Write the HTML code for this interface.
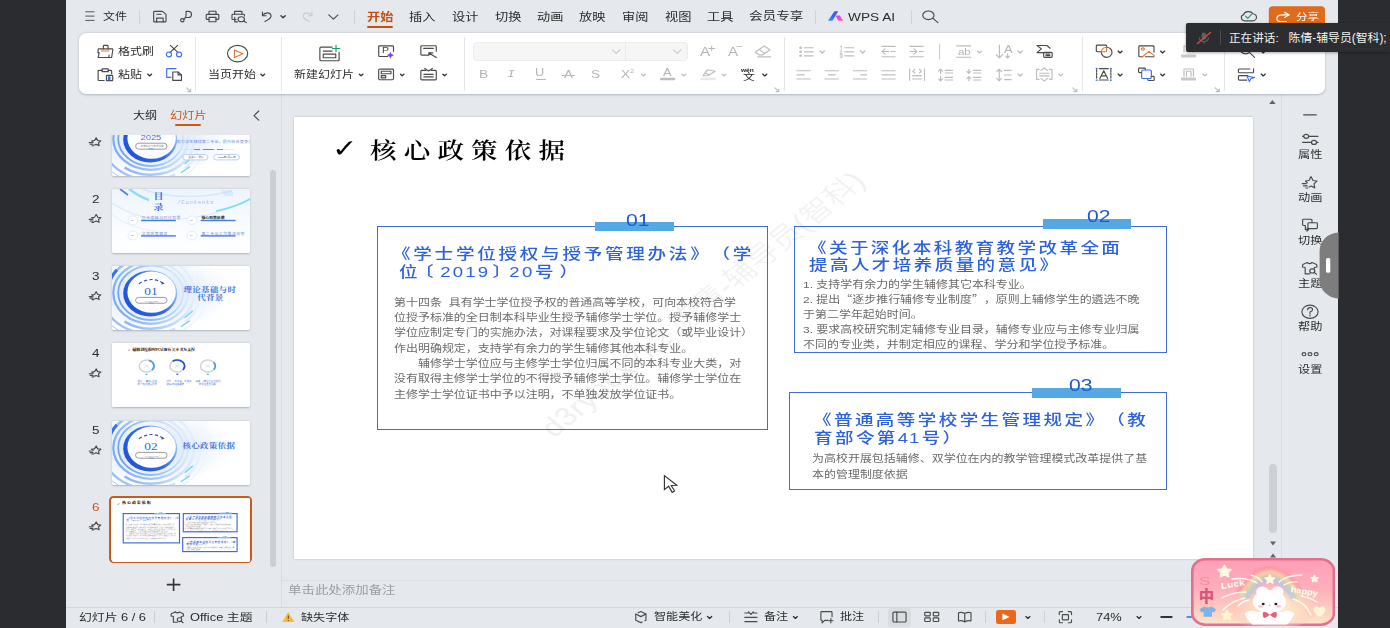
<!DOCTYPE html>
<html lang="zh-CN">
<head>
<meta charset="utf-8">
<title>WPS 演示</title>
<style>
*{box-sizing:border-box;margin:0;padding:0;text-spacing-trim:space-all}
html,body{width:1390px;height:628px;overflow:hidden;background:#2a2c2f}
body{font-family:"Liberation Sans","Noto Sans CJK SC",sans-serif;color:#2b2b2b;position:relative;font-size:10px}
.t{position:absolute;white-space:nowrap;line-height:1;transform:scaleX(1.2217);transform-origin:0 0}
.a{position:absolute}
#app{position:absolute;left:0;top:0;width:1390px;height:628px;overflow:hidden}
#bg{position:absolute;left:66px;top:0;width:1272px;height:628px;background:#e5e9ed}
#ribbon{position:absolute;left:78.6px;top:32.8px;width:1246.6px;height:61.3px;background:#fff;border-radius:7.5px/6.5px;box-shadow:0 0.6px 2.4px rgba(60,70,90,.32)}
#slide{position:absolute;left:294px;top:117px;width:959px;height:441.6px;background:#fff;box-shadow:0 0 2px rgba(80,90,110,.35)}
.vsep{position:absolute;width:1px;background:#d9dce1}
.serif{font-family:"Liberation Serif","Noto Serif CJK SC",serif}
.box{position:absolute;border:1.2px solid #3e6ddb}
.bar{position:absolute;background:#55a8e2}
.num{position:absolute;white-space:nowrap;line-height:1;transform:scaleX(1.2217);transform-origin:0 0;color:#1f58cf;font-size:17.3px}
.hd{position:absolute;white-space:nowrap;transform:scaleX(1.2217);transform-origin:0 0;color:#2d63da;font-weight:500;font-size:14.9px;letter-spacing:2.35px}
.bd{position:absolute;white-space:nowrap;transform:scaleX(1.2217);transform-origin:0 0;color:#6a6a6a;font-size:9.8px}
.cj{font-family:"Noto Sans CJK SC",sans-serif}
.thumb{position:absolute;left:111.5px;width:138.4px;height:64.2px;background:#fff;border-radius:2px;box-shadow:0 0.5px 2px rgba(70,80,100,.35);overflow:hidden}
</style>
</head>
<body>
<div id="app">
<div id="bg"></div>

<div class="a" style="left:281px;top:94px;width:1.2px;height:513px;background:#d8dde3"></div>
<div class="a" style="left:1281px;top:94px;width:1.2px;height:513px;background:#d8dde3"></div>
<div class="a" style="left:282px;top:580px;width:999px;height:1px;background:#dadee3"></div>
<div class="a" style="left:66px;top:606.5px;width:1272px;height:1px;background:#d3d7dc"></div>
<div class="a" style="left:269.8px;top:170px;width:6.4px;height:397px;border-radius:3.2px;background:#cbcfd3"></div>
<div class="a" style="left:1268.8px;top:463.5px;width:8px;height:69px;border-radius:4px;background:#cdd0d4"></div>
<div id="slide"></div>
<div class="thumb" style="top:111.7px;"><svg width="138.4" height="64.2" viewBox="0 0 138.4 64.2" style="display:block"><defs><radialGradient id="bg1" cx="0.280" cy="0.417" r="0.6"><stop offset="0" stop-color="#d6e6fb"/><stop offset="0.5" stop-color="#e8f1fd"/><stop offset="1" stop-color="#ffffff"/></radialGradient><linearGradient id="fd1" gradientUnits="userSpaceOnUse" x1="-11.200000000000003" y1="46.8" x2="88.8" y2="6.800000000000001"><stop offset="0" stop-color="#3f7df0"/><stop offset="0.45" stop-color="#8bb8f6"/><stop offset="0.75" stop-color="#cfe2fb"/><stop offset="1" stop-color="#eef5fe"/></linearGradient><linearGradient id="cr1" gradientUnits="userSpaceOnUse" x1="12.799999999999997" y1="44.8" x2="64.8" y2="8.8"><stop offset="0" stop-color="#1f4fd8"/><stop offset="0.5" stop-color="#2f6ae8"/><stop offset="0.8" stop-color="#86b4f6"/><stop offset="1" stop-color="#cfe0fa"/></linearGradient><filter id="bl1" x="-20%" y="-20%" width="140%" height="140%"><feGaussianBlur stdDeviation="0.7"/></filter><filter id="b21" x="-20%" y="-20%" width="140%" height="140%"><feGaussianBlur stdDeviation="0.35"/></filter></defs><rect width="138.4" height="64.2" fill="url(#bg1)"/><g filter="url(#bl1)" fill="none" stroke="url(#fd1)"><ellipse cx="38.8" cy="26.8" rx="56" ry="46" stroke-width="1" opacity=".5"/><ellipse cx="38.8" cy="26.8" rx="49.5" ry="41" stroke-width="2.4" stroke-dasharray="34 12 70 18" opacity=".55"/><ellipse cx="38.8" cy="26.8" rx="43.5" ry="36" stroke-width="2.6" stroke-dasharray="90 20 50 14" opacity=".7"/><ellipse cx="38.8" cy="26.8" rx="37.5" ry="31" stroke-width="2.2" opacity=".75"/><ellipse cx="38.8" cy="26.8" rx="32.6" ry="27.2" stroke-width="1.8" opacity=".9"/><path d="M4.799999999999997 3.8000000000000007 A45 37 0 0 0 -1.2000000000000028 38.8" stroke="#2f6ae6" stroke-width="3.2" opacity=".9"/><path d="M8.799999999999997 -0.1999999999999993 l4 -3 M12.799999999999997 -3.1999999999999993 l5 -3" stroke="#33409a" stroke-width="1"/><path d="M72.8 51.8 l8 -7 M68.8 60.8 l9 -6" stroke="#6fd0f4" stroke-width="1.3"/></g><ellipse cx="38.199999999999996" cy="27.400000000000002" rx="27" ry="23" fill="url(#cr1)" filter="url(#b21)"/><ellipse cx="39.599999999999994" cy="26.2" rx="24.2" ry="20.6" fill="#fff" filter="url(#b21)"/><ellipse cx="39.599999999999994" cy="26.2" rx="21.4" ry="18" fill="#fff" stroke="#eef1f8" stroke-width="0.6"/><text transform="translate(28.6,28.2) scale(1.2217,1)" font-size="7.6" fill="#3a6fd8" font-family="'Liberation Sans','Noto Sans CJK SC',sans-serif" >2025</text><rect x="23.6" y="31.2" width="31.4" height="6" rx="3.0" fill="#fff" stroke="#8e8e8e" stroke-width="0.9"/><text transform="translate(28.6,35.2) scale(1.2217,1)" font-size="2.1" fill="#888" font-family="'Liberation Sans','Noto Sans CJK SC',sans-serif" >智能科学与技术学院</text><rect x="36.5" y="36.4" width="5" height="0.9" fill="#5aa0f0"/><text transform="translate(64.6,31.4) scale(1.2217,1)" font-size="3.45" fill="#5f8fe6" font-family="'Liberation Sans','Noto Sans CJK SC',sans-serif" >助力学生辅修第二专业，提升综合竞争力</text><path d="M70.5 37.5 H122.5" stroke="#c9d6f2" stroke-width="0.5"/><path d="M82 37.5 H88 M91 37.5 H102 M105 37.5 H111" stroke="#4d6fc8" stroke-width="0.8"/><rect x="70.9" y="42.6" width="25.1" height="5.3" rx="2.65" fill="#fff" stroke="#a9c4f0" stroke-width="0.8"/><rect x="101.6" y="42.6" width="25.7" height="5.3" rx="2.65" fill="#fff" stroke="#a9c4f0" stroke-width="0.8"/><text transform="translate(76.2,46.2) scale(1.2217,1)" font-size="2.1" fill="#555" font-family="'Liberation Sans','Noto Sans CJK SC',sans-serif" >主讲人：陈倩</text><text transform="translate(106.2,46.2) scale(1.2217,1)" font-size="2.1" fill="#555" font-family="'Liberation Sans','Noto Sans CJK SC',sans-serif" >2025年9月24日</text></svg></div>
<div class="thumb" style="top:188.9px;"><svg width="138.4" height="64.2" viewBox="0 0 138.4 64.2" style="display:block"><defs><linearGradient id="g2" x1="0" y1="0" x2="0" y2="1"><stop offset="0" stop-color="#edf4fd"/><stop offset="0.5" stop-color="#f8fbfe"/><stop offset="1" stop-color="#fff"/></linearGradient><filter id="bl2"><feGaussianBlur stdDeviation="0.45"/></filter></defs><rect width="138.4" height="64.2" fill="url(#g2)"/><g filter="url(#bl2)" fill="none"><path d="M8 0 L16 6" stroke="#4f7fe8" stroke-width="1.6"/><path d="M17 0 Q28 8 37 11" stroke="#8fdcf6" stroke-width="2.4"/><path d="M30 0 Q70 14 120 2" stroke="#d3e8fb" stroke-width="1.4"/><path d="M0 14 Q30 34 70 30 Q110 26 138 9" stroke="#d8ecfb" stroke-width="1.2"/><path d="M104 22 Q124 18 138.4 10" stroke="#7fdcf4" stroke-width="1.6"/><path d="M110 2 h10 M111 4 h10 M112 6 h9" stroke="#bcd9f8" stroke-width="0.8"/><path d="M0 26 Q20 40 44 42" stroke="#e1effc" stroke-width="1"/></g><text transform="translate(41.6,9.8) scale(1.2217,1)" font-size="8.2" fill="#3a6fd8" font-family="'Liberation Serif','Noto Serif CJK SC',serif" font-weight="700">目</text><text transform="translate(41.6,21.4) scale(1.2217,1)" font-size="8.2" fill="#3a6fd8" font-family="'Liberation Serif','Noto Serif CJK SC',serif" font-weight="700">录</text><text transform="translate(65.2,15.2) scale(1.2217,1)" font-size="4.6" fill="#a3b9e8" font-family="'Liberation Mono',monospace" letter-spacing="0.6">/Contents</text><ellipse cx="20.9" cy="31.3" rx="4.9" ry="4.4" fill="#fff" stroke="#dce6f9" stroke-width="0.8"/><ellipse cx="80" cy="31.3" rx="4.9" ry="4.4" fill="#fff" stroke="#dce6f9" stroke-width="0.8"/><ellipse cx="20.9" cy="46.5" rx="4.9" ry="4.4" fill="#fff" stroke="#dce6f9" stroke-width="0.8"/><ellipse cx="80" cy="46.5" rx="4.9" ry="4.4" fill="#fff" stroke="#dce6f9" stroke-width="0.8"/><text transform="translate(18.4,32.2) scale(1.2217,1)" font-size="2.4" fill="#6f93e0" font-family="'Liberation Sans','Noto Sans CJK SC',sans-serif" >01</text><text transform="translate(77.5,32.2) scale(1.2217,1)" font-size="2.4" fill="#6f93e0" font-family="'Liberation Sans','Noto Sans CJK SC',sans-serif" >02</text><text transform="translate(18.4,47.4) scale(1.2217,1)" font-size="2.4" fill="#6f93e0" font-family="'Liberation Sans','Noto Sans CJK SC',sans-serif" >03</text><text transform="translate(77.5,47.4) scale(1.2217,1)" font-size="2.4" fill="#6f93e0" font-family="'Liberation Sans','Noto Sans CJK SC',sans-serif" >04</text><text transform="translate(29.8,30.0) scale(1.2217,1)" font-size="3.15" fill="#6a90e2" font-family="'Liberation Sans','Noto Sans CJK SC',sans-serif" letter-spacing="0.42">理论基础与时代背景</text><text transform="translate(89.5,30.0) scale(1.2217,1)" font-size="3.15" fill="#1a1a1a" font-family="'Liberation Sans','Noto Sans CJK SC',sans-serif" font-weight="700">核心政策依据</text><text transform="translate(29.8,45.6) scale(1.2217,1)" font-size="3.15" fill="#6a90e2" font-family="'Liberation Sans','Noto Sans CJK SC',sans-serif" letter-spacing="0.42">学校政策解读</text><text transform="translate(89.5,45.6) scale(1.2217,1)" font-size="3.15" fill="#6a90e2" font-family="'Liberation Sans','Noto Sans CJK SC',sans-serif" letter-spacing="0.42">第二专业工作推进规划</text><rect x="29" y="30.8" width="34.9" height="1.4" fill="#4a78dc"/><rect x="88.7" y="30.8" width="34.9" height="1.4" fill="#4a78dc"/><rect x="29" y="46.2" width="34.9" height="1.4" fill="#4a78dc"/><rect x="88.7" y="46.2" width="34.9" height="1.4" fill="#4a78dc"/></svg></div>
<div class="thumb" style="top:266.1px;"><svg width="138.4" height="64.2" viewBox="0 0 138.4 64.2" style="display:block"><defs><radialGradient id="bg3" cx="0.280" cy="0.417" r="0.6"><stop offset="0" stop-color="#d6e6fb"/><stop offset="0.5" stop-color="#e8f1fd"/><stop offset="1" stop-color="#ffffff"/></radialGradient><linearGradient id="fd3" gradientUnits="userSpaceOnUse" x1="-11.200000000000003" y1="46.8" x2="88.8" y2="6.800000000000001"><stop offset="0" stop-color="#3f7df0"/><stop offset="0.45" stop-color="#8bb8f6"/><stop offset="0.75" stop-color="#cfe2fb"/><stop offset="1" stop-color="#eef5fe"/></linearGradient><linearGradient id="cr3" gradientUnits="userSpaceOnUse" x1="12.799999999999997" y1="44.8" x2="64.8" y2="8.8"><stop offset="0" stop-color="#1f4fd8"/><stop offset="0.5" stop-color="#2f6ae8"/><stop offset="0.8" stop-color="#86b4f6"/><stop offset="1" stop-color="#cfe0fa"/></linearGradient><filter id="bl3" x="-20%" y="-20%" width="140%" height="140%"><feGaussianBlur stdDeviation="0.7"/></filter><filter id="b23" x="-20%" y="-20%" width="140%" height="140%"><feGaussianBlur stdDeviation="0.35"/></filter></defs><rect width="138.4" height="64.2" fill="url(#bg3)"/><g filter="url(#bl3)" fill="none" stroke="url(#fd3)"><ellipse cx="38.8" cy="26.8" rx="56" ry="46" stroke-width="1" opacity=".5"/><ellipse cx="38.8" cy="26.8" rx="49.5" ry="41" stroke-width="2.4" stroke-dasharray="34 12 70 18" opacity=".55"/><ellipse cx="38.8" cy="26.8" rx="43.5" ry="36" stroke-width="2.6" stroke-dasharray="90 20 50 14" opacity=".7"/><ellipse cx="38.8" cy="26.8" rx="37.5" ry="31" stroke-width="2.2" opacity=".75"/><ellipse cx="38.8" cy="26.8" rx="32.6" ry="27.2" stroke-width="1.8" opacity=".9"/><path d="M4.799999999999997 3.8000000000000007 A45 37 0 0 0 -1.2000000000000028 38.8" stroke="#2f6ae6" stroke-width="3.2" opacity=".9"/><path d="M8.799999999999997 -0.1999999999999993 l4 -3 M12.799999999999997 -3.1999999999999993 l5 -3" stroke="#33409a" stroke-width="1"/><path d="M72.8 51.8 l8 -7 M68.8 60.8 l9 -6" stroke="#6fd0f4" stroke-width="1.3"/></g><ellipse cx="38.199999999999996" cy="27.400000000000002" rx="27" ry="23" fill="url(#cr3)" filter="url(#b23)"/><ellipse cx="39.599999999999994" cy="26.2" rx="24.2" ry="20.6" fill="#fff" filter="url(#b23)"/><ellipse cx="39.599999999999994" cy="26.2" rx="21.4" ry="18" fill="#fff" stroke="#eef1f8" stroke-width="0.6"/><path d="M27 17.8 Q39.4 9.4 52 17.6" fill="none" stroke="#3d4fb4" stroke-width="1.1" stroke-dasharray="3.2 2.4"/><path d="M50 15.6 L52.6 18 L49.4 18.4 Z" fill="#3d4fb4"/><text transform="translate(32.2,28.8) scale(1.2217,1)" font-size="11" fill="#2f68d6" font-family="'Liberation Serif','Noto Serif CJK SC',serif" >01</text><rect x="23.6" y="31.4" width="31.4" height="5.8" rx="2.9" fill="#fff" stroke="#8e8e8e" stroke-width="0.9"/><text transform="translate(33.0,35.6) scale(1.2217,1)" font-size="2.2" fill="#999" font-family="'Liberation Sans','Noto Sans CJK SC',sans-serif" >PART ONE</text><rect x="36.8" y="36.6" width="4.6" height="0.9" fill="#5aa0f0"/><text transform="translate(71.4,25.6) scale(1.2217,1)" font-size="6.9" fill="#4378dc" font-family="'Liberation Serif','Noto Serif CJK SC',serif" font-weight="700" letter-spacing="0.35">理论基础与时</text><text transform="translate(85.2,34.4) scale(1.2217,1)" font-size="6.9" fill="#4378dc" font-family="'Liberation Serif','Noto Serif CJK SC',serif" font-weight="700" letter-spacing="0.35">代背景</text></svg></div>
<div class="thumb" style="top:420.5px;"><svg width="138.4" height="64.2" viewBox="0 0 138.4 64.2" style="display:block"><defs><radialGradient id="bg5" cx="0.280" cy="0.417" r="0.6"><stop offset="0" stop-color="#d6e6fb"/><stop offset="0.5" stop-color="#e8f1fd"/><stop offset="1" stop-color="#ffffff"/></radialGradient><linearGradient id="fd5" gradientUnits="userSpaceOnUse" x1="-11.200000000000003" y1="46.8" x2="88.8" y2="6.800000000000001"><stop offset="0" stop-color="#3f7df0"/><stop offset="0.45" stop-color="#8bb8f6"/><stop offset="0.75" stop-color="#cfe2fb"/><stop offset="1" stop-color="#eef5fe"/></linearGradient><linearGradient id="cr5" gradientUnits="userSpaceOnUse" x1="12.799999999999997" y1="44.8" x2="64.8" y2="8.8"><stop offset="0" stop-color="#1f4fd8"/><stop offset="0.5" stop-color="#2f6ae8"/><stop offset="0.8" stop-color="#86b4f6"/><stop offset="1" stop-color="#cfe0fa"/></linearGradient><filter id="bl5" x="-20%" y="-20%" width="140%" height="140%"><feGaussianBlur stdDeviation="0.7"/></filter><filter id="b25" x="-20%" y="-20%" width="140%" height="140%"><feGaussianBlur stdDeviation="0.35"/></filter></defs><rect width="138.4" height="64.2" fill="url(#bg5)"/><g filter="url(#bl5)" fill="none" stroke="url(#fd5)"><ellipse cx="38.8" cy="26.8" rx="56" ry="46" stroke-width="1" opacity=".5"/><ellipse cx="38.8" cy="26.8" rx="49.5" ry="41" stroke-width="2.4" stroke-dasharray="34 12 70 18" opacity=".55"/><ellipse cx="38.8" cy="26.8" rx="43.5" ry="36" stroke-width="2.6" stroke-dasharray="90 20 50 14" opacity=".7"/><ellipse cx="38.8" cy="26.8" rx="37.5" ry="31" stroke-width="2.2" opacity=".75"/><ellipse cx="38.8" cy="26.8" rx="32.6" ry="27.2" stroke-width="1.8" opacity=".9"/><path d="M4.799999999999997 3.8000000000000007 A45 37 0 0 0 -1.2000000000000028 38.8" stroke="#2f6ae6" stroke-width="3.2" opacity=".9"/><path d="M8.799999999999997 -0.1999999999999993 l4 -3 M12.799999999999997 -3.1999999999999993 l5 -3" stroke="#33409a" stroke-width="1"/><path d="M72.8 51.8 l8 -7 M68.8 60.8 l9 -6" stroke="#6fd0f4" stroke-width="1.3"/></g><ellipse cx="38.199999999999996" cy="27.400000000000002" rx="27" ry="23" fill="url(#cr5)" filter="url(#b25)"/><ellipse cx="39.599999999999994" cy="26.2" rx="24.2" ry="20.6" fill="#fff" filter="url(#b25)"/><ellipse cx="39.599999999999994" cy="26.2" rx="21.4" ry="18" fill="#fff" stroke="#eef1f8" stroke-width="0.6"/><path d="M27 17.8 Q39.4 9.4 52 17.6" fill="none" stroke="#3d4fb4" stroke-width="1.1" stroke-dasharray="3.2 2.4"/><path d="M50 15.6 L52.6 18 L49.4 18.4 Z" fill="#3d4fb4"/><text transform="translate(32.2,28.8) scale(1.2217,1)" font-size="11" fill="#2f68d6" font-family="'Liberation Serif','Noto Serif CJK SC',serif" >02</text><rect x="23.6" y="31.4" width="31.4" height="5.8" rx="2.9" fill="#fff" stroke="#8e8e8e" stroke-width="0.9"/><text transform="translate(33.0,35.6) scale(1.2217,1)" font-size="2.2" fill="#999" font-family="'Liberation Sans','Noto Sans CJK SC',sans-serif" >PART TWO</text><rect x="36.8" y="36.6" width="4.6" height="0.9" fill="#5aa0f0"/><text transform="translate(70.4,27.0) scale(1.2217,1)" font-size="6.9" fill="#4378dc" font-family="'Liberation Serif','Noto Serif CJK SC',serif" font-weight="700" letter-spacing="0.35">核心政策依据</text></svg></div>
<div class="thumb" style="top:343.3px;"><svg width="138.4" height="64.2" viewBox="0 0 138.4 64.2" style="display:block"><rect width="138.4" height="64.2" fill="#fff"/><text transform="translate(15.4,7.6) scale(1.2217,1)" font-size="3.2" fill="#222" font-family="'DejaVu Sans',sans-serif" >✓</text><text transform="translate(20.4,7.6) scale(1.2217,1)" font-size="3.2" fill="#111" font-family="'Liberation Serif','Noto Serif CJK SC',serif" font-weight="900">辅修制度的时代呈现有关本书为支撑</text><ellipse cx="34.6" cy="23" rx="7.4" ry="6" fill="#fff" stroke="#d2d2d2" stroke-width="1.5"/><path d="M37.0 17.3 A7.4 6 0 0 1 40.0 27.1" fill="none" stroke="#4aa3e6" stroke-width="1.8"/><path d="M32.4 21.4 l4.4 3.2 M32.4 24.6 l4.4 -3.2" stroke="#bcd7f5" stroke-width="0.6"/><path d="M33.0 30.8 h3.2 l-1.6 1.5z" fill="#4aa3e6"/><ellipse cx="65.3" cy="23" rx="7.4" ry="6" fill="#fff" stroke="#d2d2d2" stroke-width="1.5"/><path d="M60.699999999999996 18.3 A7.4 6 0 0 1 70.89999999999999 26.9" fill="none" stroke="#1f55d8" stroke-width="1.8"/><path d="M63.099999999999994 21.4 l4.4 3.2 M63.099999999999994 24.6 l4.4 -3.2" stroke="#bcd7f5" stroke-width="0.6"/><path d="M63.699999999999996 30.8 h3.2 l-1.6 1.5z" fill="#1f55d8"/><ellipse cx="95.9" cy="23" rx="7.4" ry="6" fill="#fff" stroke="#d2d2d2" stroke-width="1.5"/><path d="M101.5 19.1 A7.4 6 0 0 1 101.7 26.7" fill="none" stroke="#4aa3e6" stroke-width="1.8"/><path d="M93.7 21.4 l4.4 3.2 M93.7 24.6 l4.4 -3.2" stroke="#bcd7f5" stroke-width="0.6"/><path d="M94.30000000000001 30.8 h3.2 l-1.6 1.5z" fill="#4aa3e6"/><text transform="translate(25.6,39.4) scale(1.2217,1)" font-size="2.0" fill="#3f6fe0" font-family="'Liberation Sans','Noto Sans CJK SC',sans-serif" >理论："辅修+主修"</text><text transform="translate(25.6,42.2) scale(1.2217,1)" font-size="2.0" fill="#3f6fe0" font-family="'Liberation Sans','Noto Sans CJK SC',sans-serif" >的个性化培养模式</text><text transform="translate(54.4,39.4) scale(1.2217,1)" font-size="2.0" fill="#3f6fe0" font-family="'Liberation Sans','Noto Sans CJK SC',sans-serif" >时代："新工科、新文科</text><text transform="translate(54.4,42.2) scale(1.2217,1)" font-size="2.0" fill="#3f6fe0" font-family="'Liberation Sans','Noto Sans CJK SC',sans-serif" >建设"的现实要求</text><text transform="translate(83.4,39.4) scale(1.2217,1)" font-size="2.0" fill="#3f6fe0" font-family="'Liberation Sans','Noto Sans CJK SC',sans-serif" >现实："就业竞争力提升"</text><text transform="translate(86.8,42.2) scale(1.2217,1)" font-size="2.0" fill="#3f6fe0" font-family="'Liberation Sans','Noto Sans CJK SC',sans-serif" >的学生发展需要</text></svg></div>
<div class="a" style="left:109.4px;top:496.1px;width:142.4px;height:67px;border:2.1px solid #c95b1b;border-radius:4.5px;background:#fff"></div>
<div class="thumb" style="top:497.7px;box-shadow:none;border-radius:2px"><svg width="138.4" height="64.2" viewBox="0 0 138.4 64.2" style="display:block"><rect width="138.4" height="64.2" fill="#fff"/><g transform="translate(-0.9,0)"><text transform="translate(6.0,6.6) scale(1.2217,1)" font-size="3.2" fill="#222" font-family="'DejaVu Sans',sans-serif" >✓</text><text transform="translate(10.9,6.5) scale(1.2217,1)" font-size="3.3" fill="#111" font-family="'Liberation Serif','Noto Serif CJK SC',serif" font-weight="900" letter-spacing="0.75">核心政策依据</text><rect x="12.1" y="15.6" width="56.3" height="29.3" fill="#fff" stroke="#3d69dc" stroke-width="1.15"/><rect x="72.2" y="15.6" width="53.8" height="18.2" fill="#fff" stroke="#3d69dc" stroke-width="1.15"/><rect x="71.6" y="39.6" width="54.4" height="14.0" fill="#fff" stroke="#3d69dc" stroke-width="1.15"/><rect x="43.4" y="15" width="11.4" height="1.2" fill="#7fc0ee"/><rect x="108.2" y="14.6" width="12.6" height="1.2" fill="#7fc0ee"/><rect x="106.6" y="39" width="12.8" height="1.2" fill="#7fc0ee"/><text transform="translate(48.0,15.0) scale(1.2217,1)" font-size="2.4" fill="#3a66d8" font-family="'Liberation Sans','Noto Sans CJK SC',sans-serif" >01</text><text transform="translate(114.4,14.6) scale(1.2217,1)" font-size="2.4" fill="#3a66d8" font-family="'Liberation Sans','Noto Sans CJK SC',sans-serif" >02</text><text transform="translate(112.0,39.0) scale(1.2217,1)" font-size="2.4" fill="#3a66d8" font-family="'Liberation Sans','Noto Sans CJK SC',sans-serif" >03</text><text transform="translate(15.9,20.6) scale(1.2217,1)" font-size="2.2" fill="#2d63da" font-family="'Liberation Sans','Noto Sans CJK SC',sans-serif" font-weight="500" letter-spacing="0.32">《学士学位授权与授予管理办法》（学</text><text transform="translate(15.2,23.3) scale(1.2217,1)" font-size="2.2" fill="#2d63da" font-family="'Liberation Sans','Noto Sans CJK SC',sans-serif" font-weight="500" letter-spacing="0.32">位〔2019〕20号）</text><text transform="translate(75.2,19.7) scale(1.2217,1)" font-size="2.2" fill="#2d63da" font-family="'Liberation Sans','Noto Sans CJK SC',sans-serif" font-weight="500" letter-spacing="0.32">《关于深化本科教育教学改革全面</text><text transform="translate(74.4,22.3) scale(1.2217,1)" font-size="2.2" fill="#2d63da" font-family="'Liberation Sans','Noto Sans CJK SC',sans-serif" font-weight="500" letter-spacing="0.32">提高人才培养质量的意见》</text><text transform="translate(75.9,44.7) scale(1.2217,1)" font-size="2.2" fill="#2d63da" font-family="'Liberation Sans','Noto Sans CJK SC',sans-serif" font-weight="500" letter-spacing="0.32">《普通高等学校学生管理规定》（教</text><text transform="translate(75.2,47.3) scale(1.2217,1)" font-size="2.2" fill="#2d63da" font-family="'Liberation Sans','Noto Sans CJK SC',sans-serif" font-weight="500" letter-spacing="0.32">育部令第41号）</text><text transform="translate(14.5,27.4) scale(1.2217,1)" font-size="1.42" fill="#777" font-family="'Liberation Sans','Noto Sans CJK SC',sans-serif" >第十四条 具有学士学位授予权的普通高等学校，可向本校符合学</text><text transform="translate(14.5,29.6) scale(1.2217,1)" font-size="1.42" fill="#777" font-family="'Liberation Sans','Noto Sans CJK SC',sans-serif" >位授予标准的全日制本科毕业生授予辅修学士学位。授予辅修学士</text><text transform="translate(14.5,31.9) scale(1.2217,1)" font-size="1.42" fill="#777" font-family="'Liberation Sans','Noto Sans CJK SC',sans-serif" >学位应制定专门的实施办法，对课程要求及学位论文（或毕业设计）</text><text transform="translate(14.5,34.1) scale(1.2217,1)" font-size="1.42" fill="#777" font-family="'Liberation Sans','Noto Sans CJK SC',sans-serif" >作出明确规定，支持学有余力的学生辅修其他本科专业。</text><text transform="translate(14.5,36.3) scale(1.2217,1)" font-size="1.42" fill="#777" font-family="'Liberation Sans','Noto Sans CJK SC',sans-serif" >　　辅修学士学位应与主修学士学位归属不同的本科专业大类，对</text><text transform="translate(14.5,38.5) scale(1.2217,1)" font-size="1.42" fill="#777" font-family="'Liberation Sans','Noto Sans CJK SC',sans-serif" >没有取得主修学士学位的不得授予辅修学士学位。辅修学士学位在</text><text transform="translate(14.5,40.8) scale(1.2217,1)" font-size="1.42" fill="#777" font-family="'Liberation Sans','Noto Sans CJK SC',sans-serif" >主修学士学位证书中予以注明，不单独发放学位证书。</text><text transform="translate(73.5,24.8) scale(1.2217,1)" font-size="1.42" fill="#777" font-family="'Liberation Sans','Noto Sans CJK SC',sans-serif" >1. 支持学有余力的学生辅修其它本科专业。</text><text transform="translate(73.5,27.0) scale(1.2217,1)" font-size="1.42" fill="#777" font-family="'Liberation Sans','Noto Sans CJK SC',sans-serif" >2. 提出“逐步推行辅修专业制度”，原则上辅修学生的遴选不晚</text><text transform="translate(73.5,29.2) scale(1.2217,1)" font-size="1.42" fill="#777" font-family="'Liberation Sans','Noto Sans CJK SC',sans-serif" >于第二学年起始时间。</text><text transform="translate(73.5,31.4) scale(1.2217,1)" font-size="1.42" fill="#777" font-family="'Liberation Sans','Noto Sans CJK SC',sans-serif" >3. 要求高校研究制定辅修专业目录，辅修专业应与主修专业归属</text><text transform="translate(73.5,33.6) scale(1.2217,1)" font-size="1.42" fill="#777" font-family="'Liberation Sans','Noto Sans CJK SC',sans-serif" >不同的专业类，并制定相应的课程、学分和学位授予标准。</text><text transform="translate(74.8,50.1) scale(1.2217,1)" font-size="1.42" fill="#777" font-family="'Liberation Sans','Noto Sans CJK SC',sans-serif" >为高校开展包括辅修、双学位在内的教学管理模式改革提供了基</text><text transform="translate(74.8,52.3) scale(1.2217,1)" font-size="1.42" fill="#777" font-family="'Liberation Sans','Noto Sans CJK SC',sans-serif" >本的管理制度依据</text></g></svg></div>
<div class="a" style="left:66.5px;top:94.6px;width:214.5px;height:40.6px;background:#e5e9ed"></div>
<span class="t " style="left:409.0px;top:11.6px;font-size:10.8px;color:#2b2b2b;">插入</span>
<span class="t " style="left:451.8px;top:11.6px;font-size:10.8px;color:#2b2b2b;">设计</span>
<span class="t " style="left:494.6px;top:11.6px;font-size:10.8px;color:#2b2b2b;">切换</span>
<span class="t " style="left:536.7px;top:11.6px;font-size:10.8px;color:#2b2b2b;">动画</span>
<span class="t " style="left:579.0px;top:11.6px;font-size:10.8px;color:#2b2b2b;">放映</span>
<span class="t " style="left:622.3px;top:11.6px;font-size:10.8px;color:#2b2b2b;">审阅</span>
<span class="t " style="left:664.6px;top:11.6px;font-size:10.8px;color:#2b2b2b;">视图</span>
<span class="t " style="left:707.0px;top:11.6px;font-size:10.8px;color:#2b2b2b;">工具</span>
<span class="t " style="left:102.6px;top:12.2px;font-size:9.8px;color:#2b2b2b;">文件</span>
<span class="t " style="left:749.0px;top:11.4px;font-size:11.15px;color:#2b2b2b;">会员专享</span>
<span class="t " style="left:366.6px;top:11.6px;font-size:10.8px;color:#c5500f;font-weight:700">开始</span>
<div class="a" style="left:367px;top:26.2px;width:26px;height:1.8px;background:#c5500f;border-radius:1px"></div>
<span class="t " style="left:848.0px;top:12.0px;font-size:11.200000000000001px;color:#2b2b2b;">WPS AI</span>
<div class="vsep" style="left:138.7px;top:10px;height:14px;background:#cfd3d8"></div>
<div class="vsep" style="left:354px;top:10px;height:14px;background:#cfd3d8"></div>
<div class="vsep" style="left:815.4px;top:10px;height:14px;background:#cfd3d8"></div>
<div class="vsep" style="left:911px;top:10px;height:14px;background:#cfd3d8"></div>
<div id="ribbon"></div>
<span class="t " style="left:117.5px;top:46.7px;font-size:9.8px;color:#2b2b2b;">格式刷</span>
<span class="t " style="left:117.5px;top:69.9px;font-size:9.8px;color:#2b2b2b;">粘贴</span>
<span class="t " style="left:207.6px;top:69.9px;font-size:9.8px;color:#2b2b2b;">当页开始</span>
<span class="t " style="left:294.3px;top:69.9px;font-size:9.8px;color:#2b2b2b;">新建幻灯片</span>
<div class="vsep" style="left:194.8px;top:37px;height:54px;background:#e3e5e8"></div>
<div class="vsep" style="left:280.5px;top:37px;height:54px;background:#e3e5e8"></div>
<div class="vsep" style="left:463.6px;top:37px;height:54px;background:#e3e5e8"></div>
<div class="vsep" style="left:783.6px;top:37px;height:54px;background:#e3e5e8"></div>
<div class="vsep" style="left:1081.6px;top:37px;height:54px;background:#e3e5e8"></div>
<div class="vsep" style="left:1223.9px;top:37px;height:54px;background:#e3e5e8"></div>
<div class="a" style="left:472.7px;top:41.6px;width:215px;height:19px;border-radius:4px;background:#f6f6f7;border:1px solid #ececee"></div>
<div class="a" style="left:625.3px;top:42.5px;width:1px;height:17px;background:#e9e9ec"></div>
<span class="t " style="left:133.3px;top:110.8px;font-size:9.9px;color:#2b2b2b;">大纲</span>
<span class="t " style="left:169.5px;top:110.7px;font-size:10.05px;color:#c8581a;">幻灯片</span>
<div class="a" style="left:175px;top:123.8px;width:26px;height:1.8px;background:#c8581a;border-radius:1px"></div>
<span class="t " style="left:91.6px;top:193.5px;font-size:11px;color:#2b2b2b;">2</span>
<span class="t " style="left:91.6px;top:270.7px;font-size:11px;color:#2b2b2b;">3</span>
<span class="t " style="left:91.6px;top:348.0px;font-size:11px;color:#2b2b2b;">4</span>
<span class="t " style="left:91.6px;top:425.1px;font-size:11px;color:#2b2b2b;">5</span>
<span class="t " style="left:91.6px;top:502.3px;font-size:11px;color:#c8581a;">6</span>
<span class="t " style="left:288.4px;top:585.1px;font-size:11px;color:#9a9da1;">单击此处添加备注</span>
<span class="t " style="left:79.4px;top:612.0px;font-size:10.5px;color:#2b2b2b;">幻灯片 6 / 6</span>
<span class="t " style="left:189.5px;top:612.0px;font-size:10.5px;color:#2b2b2b;">Office 主题</span>
<span class="t " style="left:300.7px;top:613.0px;font-size:9.9px;color:#2b2b2b;">缺失字体</span>
<span class="t " style="left:653.5px;top:612.3px;font-size:9.9px;color:#2b2b2b;">智能美化</span>
<span class="t " style="left:763.5px;top:612.3px;font-size:9.9px;color:#2b2b2b;">备注</span>
<span class="t " style="left:840.2px;top:612.3px;font-size:9.9px;color:#2b2b2b;">批注</span>
<span class="t " style="left:1096.4px;top:612.0px;font-size:10.5px;color:#2b2b2b;">74%</span>
<div class="vsep" style="left:154.3px;top:611px;height:12px;background:#cdd1d6"></div>
<div class="vsep" style="left:265.7px;top:611px;height:12px;background:#cdd1d6"></div>
<div class="vsep" style="left:728.6px;top:611px;height:12px;background:#cdd1d6"></div>
<div class="vsep" style="left:878.4px;top:611px;height:12px;background:#cdd1d6"></div>
<div class="vsep" style="left:984.6px;top:611px;height:12px;background:#cdd1d6"></div>
<div class="vsep" style="left:1044.2px;top:611px;height:12px;background:#cdd1d6"></div>
<div class="a" style="left:887.6px;top:608.4px;width:23.8px;height:19px;border-radius:3px;background:#d9dce0"></div>
<div class="a" style="left:995.6px;top:609.5px;width:20px;height:14.6px;border-radius:2.5px;background:#e8691a"></div>
<span class="t " style="left:1297.8px;top:149.9px;font-size:10px;color:#2b2b2b;">属性</span>
<span class="t " style="left:1297.8px;top:192.7px;font-size:10px;color:#2b2b2b;">动画</span>
<span class="t " style="left:1297.8px;top:235.5px;font-size:10px;color:#2b2b2b;">切换</span>
<span class="t " style="left:1297.8px;top:278.8px;font-size:10px;color:#2b2b2b;">主题</span>
<span class="t " style="left:1297.8px;top:322.1px;font-size:10px;color:#2b2b2b;">帮助</span>
<span class="t " style="left:1297.8px;top:365.4px;font-size:10px;color:#2b2b2b;">设置</span>
<div class="a" style="left:703px;top:304px;width:0;height:0;transform:scaleX(1.2217) rotate(-45deg)"><span style="position:absolute;left:-200px;top:-16px;width:400px;text-align:center;color:#eff0f2;font-size:26px;font-weight:300;white-space:nowrap;line-height:32px;letter-spacing:0.6px">d3ryb6x7k2&nbsp;陈倩-辅导员(智科)</span></div>
<span class="t" style="left:331.7px;top:136.4px;font-size:25px;color:#000;font-family:'DejaVu Sans',sans-serif;font-weight:400">✓</span>
<span class="t serif" style="left:370.4px;top:141px;font-size:21.7px;font-weight:600;letter-spacing:5.9px;color:#000">核心政策依据</span>
<div class="box" style="left:377px;top:226px;width:390.8px;height:204px"></div>
<div class="box" style="left:794.2px;top:226px;width:373.2px;height:127.3px"></div>
<div class="box" style="left:789px;top:391.6px;width:378.4px;height:98.8px"></div>
<div class="bar" style="left:594.8px;top:222.4px;width:79px;height:8.8px"></div>
<div class="bar" style="left:1043.4px;top:219.2px;width:87.6px;height:9.4px"></div>
<div class="bar" style="left:1032.2px;top:387.7px;width:89.1px;height:10px"></div>
<span class="num" style="left:626px;top:212px">01</span>
<span class="num" style="left:1087px;top:207.8px">02</span>
<span class="num" style="left:1069.4px;top:377.2px">03</span>
<span class="hd" style="left:392.4px;top:246.8px;font-size:14.5px;letter-spacing:2.13px;line-height:1;transform:scaleX(1.2807)">《学士学位授权与授予管理办法》（学</span>
<span class="hd" style="left:399.3px;top:265.2px;font-size:14.5px;letter-spacing:2.13px;line-height:1;transform:scaleX(1.2807)">位<span style="margin-left:-4.1px;margin-right:3px">〔</span><span style="letter-spacing:1.7px">2019</span><span style="margin-left:1.7px;margin-right:-3.5px">〕</span><span style="letter-spacing:1.95px">20</span>号<span style="margin-left:2.5px">）</span></span>
<span class="hd" style="left:808.1px;top:240.5px;font-size:14.5px;letter-spacing:1.86px;line-height:1;transform:scaleX(1.2807)">《关于深化本科教育教学改革全面</span>
<span class="hd" style="left:809.0px;top:258.4px;font-size:14.5px;letter-spacing:1.86px;line-height:1;transform:scaleX(1.2807)">提高人才培养质量的意见》</span>
<span class="hd" style="left:812.5px;top:413.1px;font-size:14.5px;letter-spacing:1.86px;line-height:1;transform:scaleX(1.2807)">《普通高等学校学生管理规定》（教</span>
<span class="hd" style="left:813.5px;top:430.8px;font-size:14.5px;letter-spacing:1.86px;line-height:1;transform:scaleX(1.2807)">育部令第<span style="letter-spacing:0.6px">4</span>1号）</span>
<div class="bd" style="left:394.2px;top:294.7px;line-height:15.33px">第十四条<span style="display:inline-block;width:5.6px"></span>具有学士学位授予权的普通高等学校，可向本校符合学<br>位授予标准的全日制本科毕业生授予辅修学士学位。授予辅修学士<br>学位应制定专门的实施办法，对课程要求及学位论文（或毕业设计）<br>作出明确规定，支持学有余力的学生辅修其他本科专业。<br>　　辅修学士学位应与主修学士学位归属不同的本科专业大类，对<br>没有取得主修学士学位的不得授予辅修学士学位。辅修学士学位在<br>主修学士学位证书中予以注明，不单独发放学位证书。</div>
<div class="bd" style="left:803px;top:276.5px;line-height:15.17px">1. 支持学有余力的学生辅修其它本科专业。<br>2. 提出<span class="cj">“</span>逐步推行辅修专业制度<span class="cj">”</span>，原则上辅修学生的遴选不晚<br>于第二学年起始时间。<br>3. 要求高校研究制定辅修专业目录，辅修专业应与主修专业归属<br>不同的专业类，并制定相应的课程、学分和学位授予标准。</div>
<div class="bd" style="left:812.4px;top:451.3px;line-height:15.3px">为高校开展包括辅修、双学位在内的教学管理模式改革提供了基<br>本的管理制度依据</div>
<svg class="a" style="left:0;top:0;pointer-events:none" width="1390" height="628" viewBox="0 0 1390 628"><style>.d,.g,.lg,.b,.o,.gr,.w,.dk,.gk{fill:none;vector-effect:non-scaling-stroke;stroke-width:1.15;stroke-linecap:round;stroke-linejoin:round}.d{stroke:#4a4a4a}.g{stroke:#bdbdbd}.lg{stroke:#c9ccd0}.b{stroke:#3b6ef0}.o{stroke:#e0763a}.gr{stroke:#1f9d63}.w{stroke:#fff}.dk{stroke:#333;stroke-width:1.35}.gk{stroke:#b9b9b9;stroke-width:1.2}.bf{fill:#3b6ef0;stroke:none}</style>
<path class="d" d="M85.7 11.8 H94.1" style="stroke-width:1;stroke:#555"/>
<path class="d" d="M85.7 16.1 H94.1" style="stroke-width:1;stroke:#555"/>
<path class="d" d="M85.7 20.4 H94.1" style="stroke-width:1;stroke:#555"/>
<g transform="translate(152.8,11.0) scale(0.8812,0.7063)"><path class="d" d="M1 1.5 Q1 0.6 2 0.6 H11 L15 4.8 V14.5 Q15 15.4 14 15.4 H2 Q1 15.4 1 14.5 Z" /><path class="d" d="M4.5 4.6 H9.5" /><path class="d" d="M4.3 15.4 V10 H11.7 V15.4" /></g>
<g transform="translate(180.1,10.7) scale(0.7438,0.7125)"><path class="d" d="M5 12.2 C7.6 11 8 9 8 6.5 V1 H11 A4.3 4.3 0 0 1 11 9.6 H8" /><circle class="d" cx="3" cy="13.4" r="2.3" /></g>
<g transform="translate(205.5,10.7) scale(0.8750,0.7250)"><path class="d" d="M4 5 V0.8 H12 V5" /><path class="d" d="M4 12 H2 Q0.8 12 0.8 11 V6 Q0.8 5 2 5 H14 Q15.2 5 15.2 6 V11 Q15.2 12 14 12 H12" /><path class="d" d="M4 9.2 H12 V15.2 H4 Z" /></g>
<g transform="translate(231.2,10.7) scale(0.9750,0.7625)"><path class="d" d="M3.5 4.6 V0.8 H11 V4.6" /><path class="d" d="M5 11.5 H2 Q0.8 11.5 0.8 10.5 V5.6 Q0.8 4.6 2 4.6 H12.4 Q13.6 4.6 13.6 5.6 V7" /><path class="d" d="M3.6 8.8 V14.6 H6.4" /><circle class="d" cx="10.3" cy="11.2" r="3.3" /><path class="d" d="M12.8 13.4 L15.4 15.6" /></g>
<g transform="translate(261.7,11.3) scale(0.6375,0.6562)"><path class="d" d="M1.2 1.2 V6.8 H7" /><path class="d" d="M1.6 6.4 C5 1.5 13 1 14.5 6 C15.5 10 10 13.5 5 15.5" /></g>
<path class="dk" d="M281.0 15.7 L283.1 17.7 L285.2 15.7"/>
<g transform="translate(302.4,11.3) scale(0.6375,0.6562)"><path class="lg" d="M14.8 1.2 V6.8 H9" /><path class="lg" d="M14.4 6.4 C11 1.5 3 1 1.5 6 C0.5 10 6 13.5 11 15.5" /></g>
<path class="d" d="M328.8 14.8 L333.4 19.1 L338 14.8"/>
<defs><linearGradient id="ai1" x1="0" y1="1" x2="1" y2="0"><stop offset="0" stop-color="#3aa0ff"/><stop offset="0.55" stop-color="#3b5bf0"/><stop offset="1" stop-color="#7a3df0"/></linearGradient><linearGradient id="ai2" x1="0" y1="0" x2="1" y2="1"><stop offset="0" stop-color="#d63cf0"/><stop offset="1" stop-color="#ff5fa0"/></linearGradient></defs>
<path d="M827.8 20.8 L834.5 11.3 L838.3 11.3 L832.4 20.8 Z" fill="url(#ai1)"/>
<path d="M835.6 15.5 L839.9 15.5 L843.2 20.8 L838.3 20.8 Z" fill="url(#ai2)"/>
<ellipse class="d" cx="928.4" cy="15.3" rx="5.6" ry="4.3"/><path class="d" d="M932.8 18.1 L937.9 22.6"/>
<g transform="translate(1240.1,10.3) scale(1.0375,0.7000)"><path class="d" d="M4.2 15 A3.6 4.6 0 0 1 3.4 6.2 A4.8 5.6 0 0 1 12.4 5 A3.6 5 0 0 1 12 15 Z" /><path class="gr" d="M5.2 8.4 L7.4 11.4 L11.2 5.6" /></g>
<rect x="1268.8" y="6.3" width="56.2" height="22" rx="4" fill="#e26a1b"/>
<g transform="translate(1275.5,11.6) scale(0.9062,0.6500)"><path class="w" d="M10 1 L15 5 L10 9" /><path class="w" d="M15 5 H8 C3 5 1.5 8 1.5 11 C1.5 14 3.5 15.3 6 15.3 H12" /></g>
<g transform="translate(96.9,44.8) scale(1.0375,0.8375)"><path class="d" d="M6.2 4.8 V1.6 Q6.2 0.6 7.2 0.6 H9.8 Q10.8 0.6 10.8 1.6 V4.8" /><path class="d" d="M2.2 9.4 L1 9.4 L1.2 5.6 Q1.2 4.8 2 4.8 H14.6 Q15.4 4.8 15.4 5.6 L14.2 15.2 H1.2 L2.2 9.4" /><path class="d" d="M11.4 15.2 L11.8 12.2" /><path class="o" d="M4.2 7.4 H11.8" /></g>
<g transform="translate(165.9,45.2) scale(1.0125,0.7437)"><path class="d" d="M4.4 0.3 L12 10 M11.6 0.3 L4 10" /><ellipse class="b" cx="3" cy="12.4" rx="2.5" ry="3.2"/><ellipse class="b" cx="13" cy="12.4" rx="2.5" ry="3.2"/></g>
<g transform="translate(97.1,68.3) scale(1.0125,0.7938)"><path class="d" d="M5 2.6 H2 Q1 2.6 1 3.6 V14.4 Q1 15.4 2 15.4 H7" /><path class="d" d="M11 2.6 H13.4 Q14.4 2.6 14.4 3.6 V7" /><path class="d" d="M5 0.8 H11 V4.2 H5 Z" /><rect class="d" x="9.2" y="9" width="6.2" height="6.6" rx="0.6" /><rect class="bf" x="10.6" y="10" width="2.6" height="5" rx="0" /></g>
<path class="dk" d="M147.7 74.1 L149.7 75.9 L151.6 74.1"/>
<g transform="translate(165.9,67.9) scale(1.0125,0.8187)"><path class="b" d="M10 0.8 H1.8 Q0.8 0.8 0.8 1.8 V11.6 H5" /><path class="d" d="M6.8 5 H12 L15.4 8.6 V15.2 H6.8 Z" /><path class="d" d="M12 5 V8.6 H15.4" /></g>
<path class="g" d="M186.6 87.8 L190.6 91.6 M190.6 89.0 V91.6 H187.79999999999998"/>
<ellipse class="d" cx="237.6" cy="53.6" rx="10.1" ry="8.2"/>
<path class="o" d="M234.4 50 V57.6 L242.8 53.8 Z"/>
<path class="dk" d="M260.7 74.1 L262.7 75.9 L264.7 74.1"/>
<g transform="translate(319.1,45.3) scale(1.3000,1.0000)"><path class="d" d="M10 1.8 H1.6 Q0.6 1.8 0.6 2.8 V14.4 Q0.6 15.4 1.6 15.4 H14.4 Q15.4 15.4 15.4 14.4 V7" /><path class="d" d="M3.2 5.8 H10" /><path class="d" d="M3.2 8.8 H12.8 V12.4 H3.2 Z" /><path class="gr" d="M13 0 V6.4 M10.2 3.2 H15.9" /></g>
<path class="dk" d="M359.3 74.2 L361.1 75.8 L362.9 74.2"/>
<g transform="translate(378.0,45.3) scale(1.0125,0.7563)"><path class="d" d="M10 14.8 H1.6 Q0.7 14.8 0.7 13.8 V1.8 Q0.7 0.8 1.6 0.8 H14.4 Q15.3 0.8 15.3 1.8 V8" /></g>
<path d="M390.4 51.9 Q391 54.6 394 55.2 Q391 55.8 390.4 58.5 Q389.8 55.8 386.8 55.2 Q389.8 54.6 390.4 51.9 Z" fill="#7b3ff2" stroke="#fff" stroke-width="0.8" paint-order="stroke"/>
<g transform="translate(378.0,68.6) scale(1.0125,0.7313)"><rect class="d" x="0.7" y="0.8" width="14.6" height="14.4" rx="1.2" /><rect class="d" x="3.2" y="3.6" width="9.6" height="3.4" rx="0" /><rect class="d" x="3.2" y="9.6" width="4.4" height="3" rx="0" /></g>
<path class="dk" d="M400.5 74.2 L402.2 75.8 L403.9 74.2"/>
<g transform="translate(420.1,45.3) scale(1.0562,0.7938)"><path class="d" d="M7 12.4 H1.6 Q0.7 12.4 0.7 11.4 V1.6 Q0.7 0.6 1.6 0.6 H14.4 Q15.3 0.6 15.3 1.6 V7.5" /><path class="d" d="M3.4 3.8 H12.6" /><path class="d" d="M8.2 9.6 L15.4 15.4 M8.2 9.6 H12 M8.2 9.6 V13" /></g>
<g transform="translate(420.1,68.1) scale(1.0562,0.7625)"><path class="d" d="M5.4 3 H1.6 Q0.7 3 0.7 4 V14.4 Q0.7 15.4 1.6 15.4 H14.4 Q15.3 15.4 15.3 14.4 V4 Q15.3 3 14.4 3 H10.6" /><path class="d" d="M4.4 0.4 L8 3.8 L11.6 0.4" /><path class="d" d="M3.6 8.2 H12.4 M3.6 11.6 H12.4" /></g>
<path class="dk" d="M442.9 74.2 L444.6 75.8 L446.3 74.2"/>
<path class="lg" d="M612.4 49.8 L616.2 53.3 L620.1 49.8"/><path class="lg" d="M673.3 49.8 L677.1 53.3 L681 49.8"/>
<g transform="translate(754.2,45.3) scale(1.0500,0.7563)"><path class="g" d="M1 9.2 L9.6 0.8 L15 6 L8.2 12.6 H4.4 Z" /><path class="g" d="M4.8 5.6 L10.4 11" /><path class="g" d="M3.4 15.4 H15.6" /></g>
<path class="gk" d="M641.6 74.1 L643.5 75.9 L645.3 74.1"/>
<path class="gk" d="M681.7 74.1 L683.8 75.9 L685.8 74.1"/>
<path class="gk" d="M722.1 74.1 L724.0 75.9 L725.9 74.1"/>
<rect x="660" y="77.7" width="15.2" height="2.6" rx="0.8" fill="#bdbdbd"/>
<rect x="700.2" y="77.7" width="15.5" height="2.6" rx="0.8" fill="#e9e9ea"/>
<g transform="translate(700.2,68.4) scale(0.9688,0.5375)"><path class="g" d="M3 13.6 L7.4 2.6 L15.4 5.2 M3 13.6 L8 13.6 L15.4 5.2 M4.8 9 L9.6 11.6" /></g>
<path class="dk" d="M762.7 74.1 L764.8 75.9 L766.8 74.1"/>
<path class="g" d="M775 87.8 L778.8 91.6 M778.8 89.0 V91.6 H776.2"/>
<ellipse cx="800.6" cy="47.7" rx="1.5" ry="1.2" fill="#c2c2c2"/><path class="g" d="M804.4 47.7 H813.2"/>
<ellipse cx="800.6" cy="51.8" rx="1.5" ry="1.2" fill="#c2c2c2"/><path class="g" d="M804.4 51.8 H813.2"/>
<ellipse cx="800.6" cy="55.8" rx="1.5" ry="1.2" fill="#c2c2c2"/><path class="g" d="M804.4 55.8 H813.2"/>
<path class="gk" d="M820.0 51.0 L822.2 53.0 L824.4 51.0"/>
<path class="g" d="M844.8 47.7 H853.6"/>
<path class="g" d="M844.8 51.8 H853.6"/>
<path class="g" d="M844.8 55.8 H853.6"/>
<path class="g" d="M840.2 46.6 L841.4 45.8 V49.4 M840 51 H842 L840 53.4 H842.2 M840 54.6 H842 V57.6 H840 M840.6 56.1 H842" style="stroke-width:0.8"/>
<path class="gk" d="M860.6 51.0 L862.7 53.0 L864.8 51.0"/>
<path class="g" d="M881.9 46.4 H895.1 M881.9 56.7 H895.1 M882.2 51.5 H888.6 M885 48.8 L882.2 51.5 L885 54.2 M891 51.5 H895.1"/>
<path class="g" d="M910 46.4 H923.3 M910 56.7 H923.3 M910 51.5 H916.6 M914 48.8 L916.8 51.5 L914 54.2 M919.2 51.5 H923.3"/>
<path class="lg" d="M939.6 44 V58.7"/>
<path class="g" d="M956.5 45.8 H970.8 M956.5 57.2 H970.8"/>
<path class="gk" d="M977.6 51.1 L979.6 52.9 L981.7 51.1"/>
<path class="g" d="M999.4 45 V57.6 M996.2 54.6 L999.4 57.8 L1002.6 54.6 M1007.6 53.8 V57.8 M1005.8 56.2 L1007.6 58 L1009.4 56.2"/>
<path class="gk" d="M1018.1 51.0 L1020.2 53.0 L1022.3 51.0"/>
<g transform="translate(1036.2,44.8) scale(1.0375,0.8125)"><path class="d" d="M10 9.6 H0.8 L5 5 L0.8 0.8 H10.4 L13.4 4.2" /><rect class="d" x="7.2" y="9.4" width="8.2" height="6" rx="1" /><path class="d" d="M9.4 11.4 H13.2 M9.4 13.4 H13.2" /></g>
<path class="g" d="M796.9 70.7 H810.3 M796.9 74.8 H804.2 M796.9 79 H810.3 "/>
<path class="g" d="M825.1 70.7 H838.4 M828.4 74.8 H835.3 M825.1 79 H838.4 "/>
<path class="g" d="M853.4 70.7 H866.6 M860.8 74.8 H866.6 M853.4 79 H866.6 "/>
<path class="g" d="M881.9 70.7 H895.1 M881.9 74.8 H895.1 M881.9 79 H895.1 "/>
<path class="g" d="M909.6 69 V80.3 M924.5 69 V80.3 M912.6 75.6 H921.6 M912.6 79 H921.6 M914.8 69.4 L912.8 71.2 L914.8 73 M919.4 69.4 L921.4 71.2 L919.4 73"/>
<path class="g" d="M940.6 69.4 V73.6 M938.6 71.2 L940.6 69.2 L942.6 71.2 M940.6 76.4 V80.6 M938.6 78.8 L940.6 80.8 L942.6 78.8 M945.2 70.4 H952.7 M945.2 73 H952.7 M945.2 77.4 H952.7 M945.2 80 H952.7"/>
<path class="g" d="M968.8 69.2 V73.4 M966.8 71.4 L968.8 73.4 L970.8 71.4 M968.8 76.6 V80.8 M966.8 78.6 L968.8 76.6 L970.8 78.6 M973.4 70.4 H980.8 M973.4 73 H980.8 M973.4 77.4 H980.8 M973.4 80 H980.8"/>
<path class="g" d="M999.2 69.4 V80.6 M996.8 71.6 L999.2 69.2 L1001.6 71.6 M996.8 78.4 L999.2 80.8 L1001.6 78.4 M1004.4 70.4 H1011.3 M1004.4 75 H1011.3 M1004.4 79.6 H1011.3"/>
<path class="gk" d="M1018.1 74.0 L1020.2 76.0 L1022.3 74.0"/>
<path class="g" d="M1039 69.4 H1036.6 V79.4 H1039 M1049.6 69.4 H1052 V79.4 H1049.6 M1039.6 73.2 H1049 M1039.6 75.8 H1049 M1041 70.6 L1044.3 68 L1047.6 70.6 M1041 78.4 L1044.3 81 L1047.6 78.4"/>
<path class="gk" d="M1058.7 74.1 L1060.7 75.9 L1062.7 74.1"/>
<path class="g" d="M1072.8 87.8 L1076.8 91.6 M1076.8 89.0 V91.6 H1074.0"/>
<g transform="translate(1095.6,44.8) scale(1.0375,0.8125)"><path class="d" d="M5.6 8.6 H1.6 Q0.7 8.6 0.7 7.6 V1.4 Q0.7 0.4 1.6 0.4 H9.6 Q10.6 0.4 10.6 1.4 V3" /><path class="d" d="M10.6 15.4 A5.2 6.2 0 0 1 5.6 8.6 M10.6 3 A5.2 6.2 0 0 1 10.6 15.4" /><path class="o" d="M5.6 8.6 A5.2 6.2 0 0 1 10.6 3 V7.6 Q10.6 8.6 9.6 8.6 Z" /></g>
<path class="dk" d="M1118.1 51.1 L1120.1 52.9 L1122.1 51.1"/>
<g transform="translate(1138.1,45.3) scale(1.0375,0.7563)"><path class="d" d="M4 15.2 H1.6 Q0.7 15.2 0.7 14.2 V1.8 Q0.7 0.8 1.6 0.8 H14.4 Q15.3 0.8 15.3 1.8 V9" /><circle class="o" cx="4.6" cy="5" r="1.5" /><path class="o" d="M4 15.4 L10.4 8 L15.6 13.6" /><path class="d" d="M7 15.2 H15.3" /></g>
<path class="dk" d="M1160.6 51.1 L1162.6 52.9 L1164.6 51.1"/>
<rect x="1181.1" y="54.4" width="15" height="3" rx="0.6" fill="#c9c9c9"/>
<path class="g" d="M1184 52 V46 H1193 V52"/>
<g transform="translate(1095.6,67.7) scale(1.0188,0.8312)"><path class="d" d="M1 2.4 V13.6 M15 2.4 V13.6" stroke-dasharray="2 1.2"/><path class="d" d="M3.6 1.2 H12.4 M3.6 14.8 H12.4" /><path class="d" d="M4.2 13 L8 3.6 L11.8 13 M5.6 9.8 H10.4" /><rect class="bf" x="0.1" y="0.2" width="1.8" height="1.6" rx="0" /><rect class="bf" x="14.1" y="0.2" width="1.8" height="1.6" rx="0" /><rect class="bf" x="0.1" y="14.2" width="1.8" height="1.6" rx="0" /><rect class="bf" x="14.1" y="14.2" width="1.8" height="1.6" rx="0" /></g>
<path class="dk" d="M1118.1 74.1 L1120.1 75.9 L1122.1 74.1"/>
<g transform="translate(1138.1,67.7) scale(1.0375,0.8312)"><path class="d" d="M3.4 6 H1.4 Q0.5 6 0.5 5 V1.6 Q0.5 0.6 1.4 0.6 H6 Q7 0.6 7 1.6 V2.6" /><path class="d" d="M12.6 10.4 H14.6 Q15.5 10.4 15.5 11.4 V14.4 Q15.5 15.4 14.6 15.4 H10.4 Q9.4 15.4 9.4 14.4 V13.2" /><rect class="b" x="3.4" y="2.8" width="9.4" height="10.2" rx="1.6" fill="#fff"/></g>
<path class="dk" d="M1160.6 74.1 L1162.6 75.9 L1164.6 74.1"/>
<path class="g" d="M1184 76.2 V69 H1193.4 V76.2 M1186.4 76.2 V71.2 H1191 V76.2"/>
<rect x="1181.1" y="77.4" width="15" height="3.2" rx="0.6" fill="#c9c9c9"/>
<path class="gk" d="M1202.9 74.1 L1204.8 75.9 L1206.7 74.1"/>
<path class="g" d="M1215 87.8 L1219.2 91.6 M1219.2 89.0 V91.6 H1216.2"/>
<ellipse class="d" cx="1245.6" cy="49.4" rx="5.4" ry="4.4"/><path class="d" d="M1249.6 52.6 L1254.6 57.4"/>
<path class="dk" d="M1261.2 51.1 L1263.2 52.9 L1265.3 51.1"/>
<g transform="translate(1237.8,68.4) scale(1.0500,0.7687)"><path class="d" d="M11.6 0.8 H1.6 Q0.6 0.8 0.6 1.8 V4.6 Q0.6 5.6 1.6 5.6 H14 Q15 5.6 15 4.6 V0.6" /><path class="d" d="M8.6 15.2 H1.6 Q0.6 15.2 0.6 14.2 V10.4 Q0.6 9.4 1.6 9.4 H9.6" /></g>
<path d="M1247 76 L1254.6 77.6 L1250.8 78.8 L1249.4 81.6 Z" fill="#fff" stroke="#3b6ef0" stroke-width="1.1" stroke-linejoin="round"/>
<path class="dk" d="M1261.2 74.1 L1263.2 75.9 L1265.3 74.1"/>
<path class="d" d="M258.8 111 L254 115.6 L258.8 120.2"/>
<g transform="translate(88.9,137.4) scale(0.7750,0.5625)"><path class="d" d="M9.4 0.8 L11.4 5.6 L15.4 6.2 L12.4 9.6 L13.2 14.6 L9.4 12.4 L7.4 13.6 M9.4 0.8 L7.2 5.6 L3.6 6.2 L5.6 8.4" /><path class="d" d="M0.4 9.4 H4.4 M1.6 12.2 H5.4 M4 14.8 H6" /></g>
<g transform="translate(88.9,214.1) scale(0.7750,0.5625)"><path class="d" d="M9.4 0.8 L11.4 5.6 L15.4 6.2 L12.4 9.6 L13.2 14.6 L9.4 12.4 L7.4 13.6 M9.4 0.8 L7.2 5.6 L3.6 6.2 L5.6 8.4" /><path class="d" d="M0.4 9.4 H4.4 M1.6 12.2 H5.4 M4 14.8 H6" /></g>
<g transform="translate(88.9,291.3) scale(0.7750,0.5625)"><path class="d" d="M9.4 0.8 L11.4 5.6 L15.4 6.2 L12.4 9.6 L13.2 14.6 L9.4 12.4 L7.4 13.6 M9.4 0.8 L7.2 5.6 L3.6 6.2 L5.6 8.4" /><path class="d" d="M0.4 9.4 H4.4 M1.6 12.2 H5.4 M4 14.8 H6" /></g>
<g transform="translate(88.9,368.5) scale(0.7750,0.5625)"><path class="d" d="M9.4 0.8 L11.4 5.6 L15.4 6.2 L12.4 9.6 L13.2 14.6 L9.4 12.4 L7.4 13.6 M9.4 0.8 L7.2 5.6 L3.6 6.2 L5.6 8.4" /><path class="d" d="M0.4 9.4 H4.4 M1.6 12.2 H5.4 M4 14.8 H6" /></g>
<g transform="translate(88.9,445.7) scale(0.7750,0.5625)"><path class="d" d="M9.4 0.8 L11.4 5.6 L15.4 6.2 L12.4 9.6 L13.2 14.6 L9.4 12.4 L7.4 13.6 M9.4 0.8 L7.2 5.6 L3.6 6.2 L5.6 8.4" /><path class="d" d="M0.4 9.4 H4.4 M1.6 12.2 H5.4 M4 14.8 H6" /></g>
<g transform="translate(88.9,521.5) scale(0.7750,0.5625)"><path class="d" d="M9.4 0.8 L11.4 5.6 L15.4 6.2 L12.4 9.6 L13.2 14.6 L9.4 12.4 L7.4 13.6 M9.4 0.8 L7.2 5.6 L3.6 6.2 L5.6 8.4" /><path class="d" d="M0.4 9.4 H4.4 M1.6 12.2 H5.4 M4 14.8 H6" /></g>
<path class="d" d="M173.6 578.4 V590.9 M166.8 584.6 H180.4" style="stroke-width:1.6;stroke:#333;stroke-linecap:butt"/>
<path class="d" d="M1303.6 114.8 H1316.3"/>
<path class="d" d="M1302.6 136.3 H1303.6 M1308.8 136.3 H1318 M1302.6 142.4 H1311.4 M1316.6 142.4 H1318"/><ellipse class="d" cx="1306.2" cy="136.3" rx="2.5" ry="2"/><ellipse class="d" cx="1314" cy="142.4" rx="2.5" ry="2"/>
<g transform="translate(1301.9,176.0) scale(0.9750,0.8125)"><path class="d" d="M9.4 0.8 L11.4 5.6 L15.4 6.2 L12.4 9.6 L13.2 14.6 L9.4 12.4 L7.4 13.6 M9.4 0.8 L7.2 5.6 L3.6 6.2 L5.6 8.4" /><path class="d" d="M0.4 9.4 H4.4 M1.6 12.2 H5.4 M4 14.8 H6" /></g>
<g transform="translate(1301.9,218.8) scale(1.0062,0.7937)"><path class="d" d="M3.4 8.4 H1.6 Q0.7 8.4 0.7 7.4 V1.6 Q0.7 0.6 1.6 0.6 H9 Q10 0.6 10 1.6 V5" /><rect class="d" x="6" y="5" width="9.4" height="7.4" rx="1" /><path class="d" d="M3.4 8.4 V13.6 H6.6 M5 11.8 L6.8 13.6 L5 15.4" /></g>
<g transform="translate(1301.8,261.9) scale(0.9875,0.7938)"><path class="d" d="M5.6 0.8 L1 3.2 L0.6 6.4 L3.4 7 V15 H8" /><path class="d" d="M5.6 0.8 Q8 3.4 10.4 0.8 L15 3.2 L15.4 6.4 L12.6 7 V8.4" /><circle class="d" cx="10.6" cy="11.4" r="2.6" /><path class="d" d="M12.4 13.2 L14.8 15.6" /></g>
<ellipse class="d" cx="1310" cy="311.8" rx="8.1" ry="6.6"/>
<path class="d" d="M1307.6 309.8 Q1307.6 307.6 1310 307.6 Q1312.6 307.6 1312.6 309.6 Q1312.6 311 1310 312 V313.4 M1310 314.8 V316"/>
<ellipse class="d" cx="1304" cy="354.2" rx="1.9" ry="1.55"/>
<ellipse class="d" cx="1310" cy="354.2" rx="1.9" ry="1.55"/>
<ellipse class="d" cx="1316.2" cy="354.2" rx="1.9" ry="1.55"/>
<path d="M1338.6 232.6 H1338.6 C1328 233 1319.6 241 1319.6 251 V280 C1319.6 290 1328 298 1338.6 298.7 Z" fill="#7d7d7d"/>
<rect x="1326" y="258" width="4.3" height="14.8" rx="1.6" fill="#fff"/>
<path d="M1269.2 104 L1272.4 100 L1275.6 104 Z" fill="#5f6266"/>
<path d="M1270 541.6 L1273 545.6 L1276 541.6 Z" fill="#5f6266"/>
<path d="M1270 557.6 L1273 553.6 L1276 557.6 Z" fill="#5f6266"/>
<g transform="translate(170.5,611.4) scale(0.8500,0.7250)"><path class="d" d="M5.6 0.8 L1 3.2 L0.6 6.4 L3.4 7 V15 H8" /><path class="d" d="M5.6 0.8 Q8 3.4 10.4 0.8 L15 3.2 L15.4 6.4 L12.6 7 V8.4" /><circle class="d" cx="10.6" cy="11.4" r="2.6" /><path class="d" d="M12.4 13.2 L14.8 15.6" /></g>
<path d="M288.3 612 L294.3 622 H282.3 Z" fill="#f7b93e"/><path d="M288.3 615.4 V618.8 M288.3 620 V621" stroke="#6b4a10" stroke-width="1.1" fill="none"/>
<g transform="translate(634.7,610.8) scale(0.7687,0.7875)"><path class="d" d="M8 1 L14.6 4 V12 L8 15 L1.4 12 V4 Z" stroke-dasharray="13 3"/><path class="d" d="M1.4 4.2 L8 7.4 L14.6 4.2" /></g>
<path class="dk" d="M707.5 616.5 L709.6 618.5 L711.7 616.5"/>
<path class="d" d="M744.8 613 H748.4 M753.4 613 H757 M748.6 611.8 L750.9 614.4 L753.2 611.8 M744.8 617.4 H757 M744.8 621.6 H757"/>
<path class="dk" d="M793.4 616.6 L795.4 618.4 L797.3 616.6"/>
<g transform="translate(820.3,611.0) scale(0.8375,0.8125)"><path class="d" d="M9 11.6 H5.4 L2.2 14.6 V11.6 H1.6 Q0.7 11.6 0.7 10.6 V1.8 Q0.7 0.8 1.6 0.8 H13 Q14 0.8 14 1.8 V7" /><path class="d" d="M12.6 9.4 V14.6 M10 12 H15.2" /></g>
<g transform="translate(892.4,611.6) scale(0.8875,0.6875)"><rect class="d" x="0.6" y="0.8" width="14.8" height="14.4" rx="1.4" /><path class="d" d="M5 0.8 V15.2" /></g>
<g transform="translate(924.2,611.8) scale(0.9437,0.6375)"><rect class="d" x="0.6" y="0.8" width="5.8" height="5.6" rx="0.8" /><rect class="d" x="9.6" y="0.8" width="5.8" height="5.6" rx="0.8" /><rect class="d" x="0.6" y="9.6" width="5.8" height="5.6" rx="0.8" /><rect class="d" x="9.6" y="9.6" width="5.8" height="5.6" rx="0.8" /></g>
<g transform="translate(957.8,611.4) scale(0.8688,0.7125)"><path class="d" d="M8 3 Q4.4 0.4 0.8 2 V13.4 Q4.4 12 8 14.8 Q11.6 12 15.2 13.4 V2 Q11.6 0.4 8 3 V14.6" /></g>
<path d="M1002.4 613.6 V620.2 L1009.6 616.9 Z" fill="#fff"/>
<path class="dk" d="M1025.9 616.6 L1027.9 618.4 L1029.9 616.6"/>
<g transform="translate(1058.6,611.0) scale(0.8500,0.7750)"><path class="d" d="M0.8 4.6 V2 Q0.8 0.8 2 0.8 H4.6 M11.4 0.8 H14 Q15.2 0.8 15.2 2 V4.6 M15.2 11.4 V14 Q15.2 15.2 14 15.2 H11.4 M4.6 15.2 H2 Q0.8 15.2 0.8 14 V11.4" /><rect class="d" x="4.4" y="4.6" width="7.2" height="6.8" rx="0.8" /></g>
<path class="dk" d="M1137.0 616.6 L1139.0 618.4 L1141.0 616.6"/>
<path d="M1160.5 617 H1172.4" stroke="#333" stroke-width="2" fill="none"/>
<path d="M1186.6 617 H1192" stroke="#3b6ef0" stroke-width="1.6" fill="none"/>
</svg>
<span class="t" style="left:478.8px;top:68.7px;font-size:11.2px;color:#b4b4b4;">B</span>
<span class="t" style="left:507.2px;top:68.7px;font-size:11.2px;color:#b4b4b4;font-family:'Liberation Mono',monospace;font-style:italic">I</span>
<span class="t" style="left:535.4px;top:68.4px;font-size:10.4px;color:#b4b4b4;">U</span>
<div class="a" style="left:535.6px;top:79.4px;width:10px;height:1.1px;background:#b9b9b9"></div>
<span class="t" style="left:564.2px;top:68.8px;font-size:11px;color:#b4b4b4;">A</span>
<div class="a" style="left:562.4px;top:75.2px;width:12.7px;height:1.1px;background:#b9b9b9"></div>
<span class="t" style="left:591.4px;top:68.7px;font-size:11.2px;color:#b4b4b4;">S</span>
<span class="t" style="left:621.0px;top:69.2px;font-size:11.2px;color:#b4b4b4;">X</span>
<span class="t" style="left:630.0px;top:68.3px;font-size:6.2px;color:#b4b4b4;">2</span>
<span class="t" style="left:663.2px;top:67.1px;font-size:10.6px;color:#b4b4b4;">A</span>
<span class="t" style="left:699.6px;top:45.8px;font-size:12.4px;color:#b4b4b4;">A</span>
<span class="t" style="left:707.6px;top:44.0px;font-size:10.4px;color:#b4b4b4;">+</span>
<span class="t" style="left:728.2px;top:45.8px;font-size:12.4px;color:#b4b4b4;">A</span>
<span class="t" style="left:736.2px;top:42.4px;font-size:10px;color:#b4b4b4;">−</span>
<span class="t" style="left:957.6px;top:47.3px;font-size:9.4px;color:#b4b4b4;">ab</span>
<span class="t" style="left:1003.6px;top:44.3px;font-size:10.6px;color:#b4b4b4;">A</span>
<span class="t" style="left:382.4px;top:46.3px;font-size:8.6px;color:#444;">P</span>
<span class="t" style="left:741.0px;top:67.5px;font-size:5.4px;color:#222;font-weight:700">wén</span>
<span class="t" style="left:742.6px;top:72.4px;font-size:9.6px;color:#222;">文</span>
<span class="t" style="left:1295.6px;top:12.2px;font-size:9.5px;color:#fff;">分享</span>
<svg class="a" style="left:660px;top:470px" width="24" height="28" viewBox="660 470 24 28"><path d="M664.4 475.6 V489.6 L668.6 486.2 L672.2 492.4 L674.6 491 L671.2 485.5 L676.8 485.3 Z" fill="#fff" stroke="#333" stroke-width="1.15" stroke-linejoin="miter"/></svg>
<div class="a" style="left:1186px;top:23px;width:204px;height:28.5px;background:#2b2d30;border-radius:2px 0 0 2px;box-shadow:0 1px 3px rgba(0,0,0,.35)"></div>
<div class="a" style="left:1220.2px;top:30.2px;width:1px;height:15px;background:#4b4d51"></div>
<svg class="a" style="left:1195px;top:30px" width="18" height="16" viewBox="0 0 18 16"><rect x="6.6" y="2.4" width="4.6" height="7.4" rx="2.3" fill="#5b5d61"/><path d="M4.4 7.6 Q4.4 11.6 8.9 11.6 Q13.4 11.6 13.4 7.6 M8.9 11.6 V13.8" stroke="#5b5d61" stroke-width="1.2" fill="none"/><path d="M16 2 L2 14" stroke="#e0473c" stroke-width="1.3"/></svg>
<span class="a" style="left:1229px;top:31.6px;font-size:11.6px;line-height:12px;color:#f2f2f2;white-space:nowrap">正在讲话:</span>
<span class="a" style="left:1288.6px;top:31.6px;font-size:11.85px;line-height:12px;color:#f2f2f2;white-space:nowrap">陈倩-辅导员(智科);</span>
<div class="a" style="left:1190.8px;top:558px;width:144.2px;height:68px"><svg width="144.2" height="68" viewBox="0 0 144.2 68" style="position:absolute;left:0;top:0"><defs><linearGradient id="skbg" x1="0" y1="0" x2="0" y2="1"><stop offset="0" stop-color="#ff9fb6"/><stop offset="0.45" stop-color="#ffaebc"/><stop offset="0.8" stop-color="#fdd0c2"/><stop offset="1" stop-color="#fde6cc"/></linearGradient><radialGradient id="skgl" cx="0.55" cy="0.62" r="0.5"><stop offset="0" stop-color="#fff4d6" stop-opacity=".95"/><stop offset="0.5" stop-color="#fde3c0" stop-opacity=".6"/><stop offset="1" stop-color="#ffb0c0" stop-opacity="0"/></radialGradient><filter id="skb" x="-20%" y="-20%" width="140%" height="140%"><feGaussianBlur stdDeviation="1.6"/></filter><filter id="skb2" x="-20%" y="-20%" width="140%" height="140%"><feGaussianBlur stdDeviation="0.6"/></filter></defs><rect x="1.3" y="1.3" width="141.6" height="65.4" rx="13" ry="11.5" fill="url(#skbg)" stroke="#e0708c" stroke-width="2.6"/><ellipse cx="80" cy="42" rx="52" ry="30" fill="url(#skgl)"/><g filter="url(#skb)" fill="none" stroke-width="3.2" opacity=".85"><path d="M46 36 Q79 -16 112 36" stroke="#f98fa0"/><path d="M49 38 Q79 -10 109 38" stroke="#f9e09a"/><path d="M52 40 Q79 -4 106 40" stroke="#b4deb0"/><path d="M55 42 Q79 2 103 42" stroke="#a9c8ee"/></g><g filter="url(#skb2)" fill="none" stroke="#fffdf0" stroke-width="1.3" stroke-linecap="round" opacity=".95"><path d="M41 21 Q56 19 66 25"/><path d="M60 17 Q68 19 71 24"/><path d="M88 24 Q96 17 111 17"/><path d="M93 27 Q100 23 106 24"/><path d="M31 40 Q42 34 55 34"/><path d="M32 52 Q42 42 54 40"/><path d="M47 48 Q52 43 58 42"/><path d="M102 41 Q114 44 120 57"/><path d="M110 38 Q120 40 126 44"/></g><g filter="url(#skb2)"><polygon points="33.5,7.0 35.6,10.9 40.4,11.6 37.0,14.6 37.8,18.9 33.5,16.9 29.2,18.9 30.0,14.6 26.6,11.6 31.4,10.9" fill="#fffbe2" stroke="#fffbe2" stroke-width="1.2" stroke-linejoin="round"/><polygon points="78.9,16.8 80.4,19.5 83.7,20.0 81.3,22.1 81.9,25.1 78.9,23.7 75.9,25.1 76.5,22.1 74.1,20.0 77.4,19.5" fill="#fffbe2" stroke="#fffbe2" stroke-width="1.2" stroke-linejoin="round"/><polygon points="123.6,17.2 124.8,19.3 127.4,19.7 125.5,21.4 125.9,23.7 123.6,22.6 121.3,23.7 121.7,21.4 119.8,19.7 122.4,19.3" fill="#fffbe2" stroke="#fffbe2" stroke-width="1.2" stroke-linejoin="round"/><polygon points="36.0,52.2 37.7,55.3 41.4,55.8 38.7,58.2 39.4,61.6 36.0,60.0 32.6,61.6 33.3,58.2 30.6,55.8 34.3,55.3" fill="#fff6cf" stroke="#fff6cf" stroke-width="1.2" stroke-linejoin="round"/><path d="M122.5 50.5 q3 -4.4 6 -0.6 q3 -3.8 6 0.6 q0.6 4.4 -6 8.4 q-6.6 -4 -6 -8.4z" fill="#fff6da"/></g><g filter="url(#skb2)"><ellipse cx="71.4" cy="34" rx="6.2" ry="5.6" fill="#fff"/><ellipse cx="86.4" cy="34" rx="6" ry="5.6" fill="#fff"/><ellipse cx="78.4" cy="43.6" rx="16.6" ry="11.6" fill="#fff"/><path d="M53.6 56 Q58 50.6 66 54 L92 54 Q99 50.6 103.4 56 Q101 62 96 66.6 H61 Q56 62 53.6 56 Z" fill="#fff"/></g><ellipse cx="72.2" cy="46" rx="1.5" ry="1.3" fill="#222"/><ellipse cx="84.9" cy="46" rx="1.5" ry="1.3" fill="#222"/><ellipse cx="69.6" cy="48.4" rx="2.6" ry="1.4" fill="#ffc4d2"/><ellipse cx="87.6" cy="48.4" rx="2.6" ry="1.4" fill="#ffc4d2"/><ellipse cx="78.6" cy="47.2" rx="1" ry="0.6" fill="#f5a3b6"/><path d="M78.8 56.8 Q73 52 71.8 55 Q71.4 59.6 73.4 60 Q76 59.6 78.8 56.8 Q81.6 59.6 84.2 60 Q86.2 59.6 85.8 55 Q84.6 52 78.8 56.8 Z" fill="#e8607c"/><path d="M8.6 51.2 l4.4 -2.6 q3.8 2 7.6 0 l4.4 2.6 -1.8 3.4 -2.2 -0.8 v5 h-8.4 v-5 l-2.2 0.8z" fill="#7fb1ee"/></svg><span style="position:absolute;left:8.4px;top:17.4px;font-size:11.6px;line-height:11.6px;color:#f38ba2;transform:scaleX(1.45);transform-origin:0 0">S</span><span style="position:absolute;left:8px;top:30.6px;font-size:15.4px;line-height:15.4px;color:#d9577a;font-weight:900">中</span><span style="position:absolute;left:30px;top:23.6px;font-size:8.4px;line-height:8.4px;color:#fffdf2;font-weight:700;letter-spacing:.4px;transform:rotate(-9deg) scaleX(1.15);transform-origin:0 50%">Luck</span><span style="position:absolute;left:100.4px;top:26.6px;font-size:8.4px;line-height:8.4px;color:#fffdf2;font-weight:700;transform:rotate(9deg) scaleX(1.1);transform-origin:0 50%">happy</span></div>

</div>
</body>
</html>
